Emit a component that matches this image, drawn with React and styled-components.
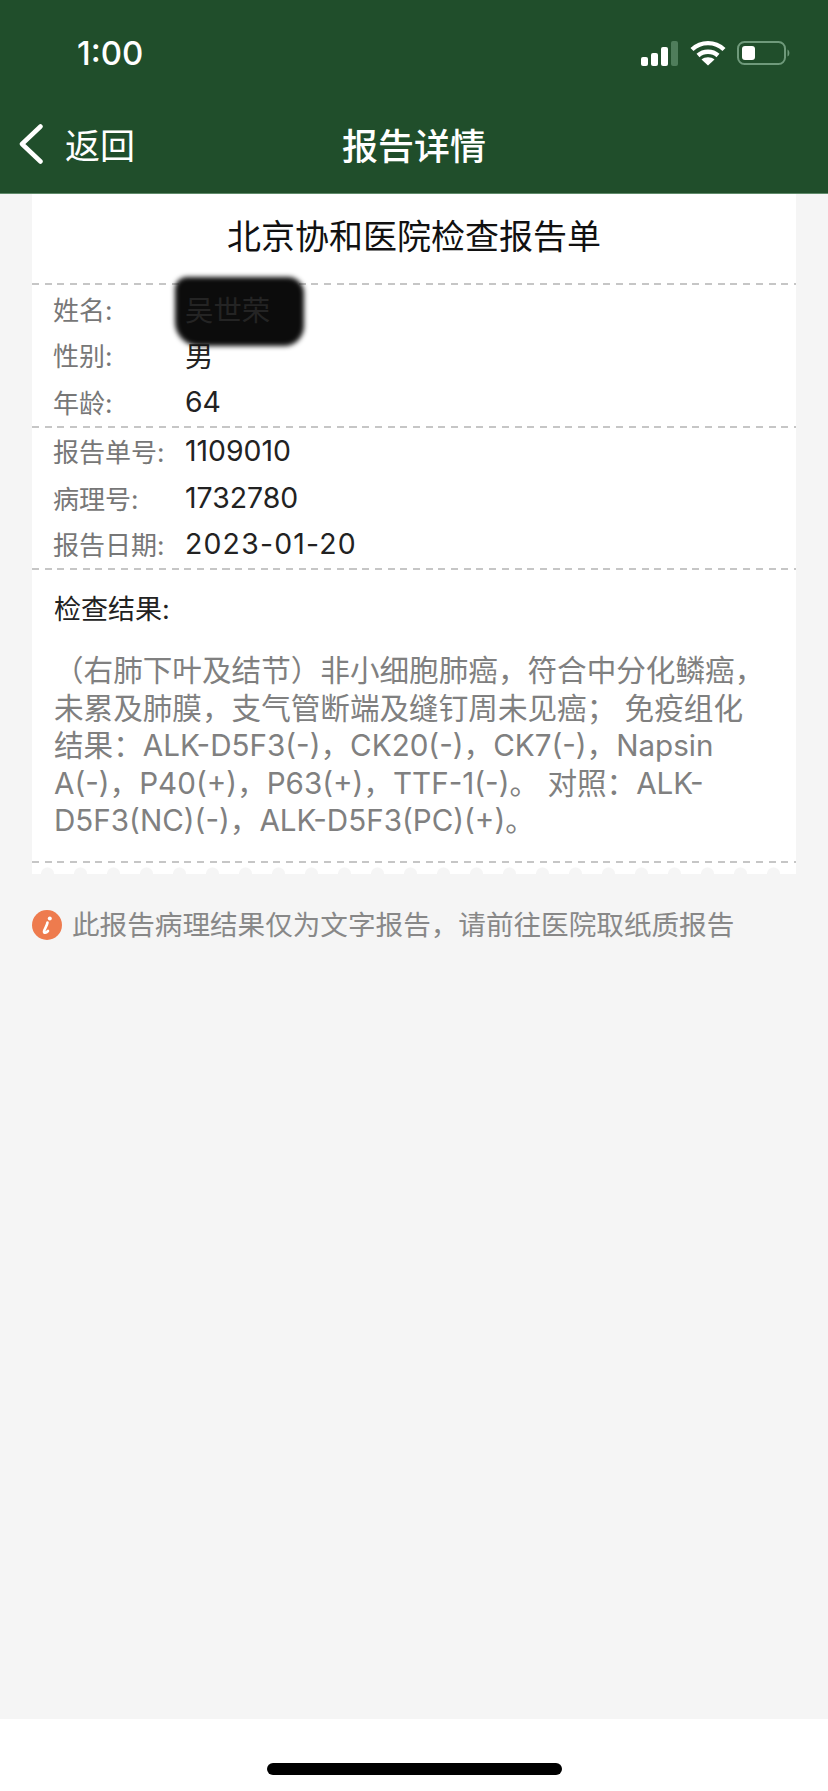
import React from "react"
import styled, { createGlobalStyle } from "styled-components"

const GlobalStyle = createGlobalStyle`
    html, body {
        margin: 0;
        padding: 0;
        background: #f5f5f5;
    }
    body {
        font-family: "Inter", "Noto Sans CJK SC", sans-serif;
    }
`

const Page = styled.div`
    width: 828px;
    height: 1791px;
    display: flex;
    flex-direction: column;
    overflow: hidden;
    background: #f5f5f5;
`

const Header = styled.header`
    height: 194px;
    box-sizing: border-box;
    flex: none;
    background: #204e2b;
    border-bottom: 1px solid #5f8a6a;
    color: #fff;
`

const StatusBar = styled.div`
    height: 105px;
    box-sizing: border-box;
    padding: 34px 37px 0 77px;
    display: flex;
    justify-content: space-between;
    align-items: flex-start;
`

const Clock = styled.span`
    font-size: 33px;
    line-height: 38px;
    font-weight: 500;
`

const StatusIcons = styled.div`
    display: flex;
    align-items: center;
    margin-top: 6px;
`

const NavBar = styled.nav`
    height: 82px;
    display: grid;
    grid-template-columns: 1fr auto 1fr;
    align-items: center;
    padding-bottom: 5px;
    box-sizing: border-box;
`

const BackLink = styled.div`
    display: flex;
    align-items: center;
    gap: 22px;
    padding-left: 19px;
    font-size: 35px;
    font-weight: 400;
`

const NavTitle = styled.h1`
    margin: 0;
    font-size: 36px;
    font-weight: 500;
`

const Card = styled.section`
    margin: 0 32px;
    background: #fff;
`

const ReportTitle = styled.h2`
    margin: 0;
    height: 89px;
    line-height: 86px;
    text-align: center;
    font-size: 34px;
    font-weight: 400;
    color: #111;
`

const Divider = styled.div`
    height: 2px;
    background: repeating-linear-gradient(90deg, #c6c6c6 0 7px, transparent 7px 12.7px);
`

const Fields = styled.div`
    padding: 0 22px 1px;
`

const FieldRow = styled.div`
    height: 46.5px;
    display: grid;
    grid-template-columns: 131px 1fr;
    align-items: center;
`

const Label = styled.span`
    font-size: 26px;
    margin-left: -1px;
    color: #777;
`

const Value = styled.span`
    font-size: 28.4px;
    letter-spacing: ${(p) => (p.$date ? "1.2px" : "0")};
    color: #222;
`

const MaskedValue = styled(Value)`
    position: relative;
    z-index: 1;
    width: fit-content;
    color: #242424;
    &::before {
        content: "";
        position: absolute;
        z-index: -1;
        left: -10px;
        right: -34px;
        top: -11px;
        bottom: -17px;
        background: #0c0c0c;
        border-radius: 12px 16px 20px 24px;
        filter: blur(2.5px);
    }
`

const Result = styled.div`
    padding: 20px 22px 21px;
`

const ResultHeading = styled.h3`
    margin: 0 0 22px;
    font-size: 27px;
    line-height: 40px;
    font-weight: 400;
    color: #222;
`

const ResultText = styled.p`
    margin: 0;
    font-size: 29.6px;
    line-height: 37.6px;
    color: #808080;
`

const Scallops = styled.div`
    height: 11px;
    margin: 0 32px;
    background-color: #fff;
    background-image: radial-gradient(circle at 50% 100%, #f5f5f5 0 6px, transparent 7px);
    background-size: 33px 11px;
    background-position: -1px 0;
`

const Notice = styled.div`
    margin: 36px 32px 0;
    display: flex;
    align-items: center;
    gap: 10px;
    font-size: 27.6px;
    line-height: 30px;
    color: #888;
`

const Spacer = styled.div`
    flex: 1;
`

const HomeArea = styled.footer`
    height: 72px;
    flex: none;
    background: #fff;
    display: flex;
    justify-content: center;
    padding-top: 44px;
    box-sizing: border-box;
`

const HomeBar = styled.div`
    width: 295px;
    height: 12px;
    border-radius: 6px;
    background: #000;
`

const SignalIcon = () => (
    <svg width="37" height="25" viewBox="0 0 37 25" fill="#fff">
        <rect x="0" y="16" width="7" height="9" rx="2" />
        <rect x="10" y="12" width="7" height="13" rx="2" />
        <rect x="20" y="6" width="7" height="19" rx="2" />
        <rect x="30" y="0" width="7" height="25" rx="2" fill="#4f7d5b" />
    </svg>
)

const WifiIcon = () => (
    <svg width="36" height="26" viewBox="0 0 36 26" fill="none" stroke="#fff" strokeWidth="4.4" style={{ marginLeft: 12 }}>
        <path d="M2 9.5C11 1 25 1 34 9.5" />
        <path d="M8 15.5C13.5 10.5 22.500 10.5 28 15.5" />
        <path d="M18 25.500L11.500 19.500C15 16.500 21 16.500 24.500 19.500Z" fill="#fff" stroke="none" />
    </svg>
)

const BatteryIcon = () => (
    <svg width="54" height="24" viewBox="0 0 54 24" style={{ marginLeft: 11 }}>
        <rect x="1" y="1" width="47" height="22" rx="6.500" fill="none" stroke="#6f9a7b" strokeWidth="2" />
        <rect x="5" y="5" width="13" height="14" rx="3" fill="#fff" />
        <path d="M50.500 8.500C53 9.500 53 14.500 50.500 15.500Z" fill="#6f9a7b" />
    </svg>
)

const BackIcon = () => (
    <svg width="24" height="40" viewBox="0 0 24 40" fill="none" stroke="#fff" strokeWidth="4.500" strokeLinecap="round" strokeLinejoin="round">
        <path d="M21.500 2.500L3 20L21.500 37.500" />
    </svg>
)

const InfoIcon = () => (
    <svg width="30" height="30" viewBox="0 0 30 30" style={{ flex: "none" }}>
        <circle cx="15" cy="15" r="15" fill="#ee7b4e" />
        <circle cx="17.800" cy="8.500" r="2" fill="#fff" />
        <path d="M15.500 12.500C15 16 12.500 19 12 21.500C11.800 23.500 14 23 16 21" fill="none" stroke="#fff" strokeWidth="2.600" strokeLinecap="round" />
    </svg>
)

const App = () => {
    return (
        <Page>
            <GlobalStyle />
            <Header>
                <StatusBar>
                    <Clock>1:00</Clock>
                    <StatusIcons>
                        <SignalIcon />
                        <WifiIcon />
                        <BatteryIcon />
                    </StatusIcons>
                </StatusBar>
                <NavBar>
                    <BackLink>
                        <BackIcon />
                        <span>返回</span>
                    </BackLink>
                    <NavTitle>报告详情</NavTitle>
                </NavBar>
            </Header>
            <Card>
                <ReportTitle>北京协和医院检查报告单</ReportTitle>
                <Divider />
                <Fields>
                    <FieldRow>
                        <Label>姓名:</Label>
                        <MaskedValue>吴世荣</MaskedValue>
                    </FieldRow>
                    <FieldRow>
                        <Label>性别:</Label>
                        <Value>男</Value>
                    </FieldRow>
                    <FieldRow>
                        <Label>年龄:</Label>
                        <Value>64</Value>
                    </FieldRow>
                </Fields>
                <Divider />
                <Fields>
                    <FieldRow>
                        <Label>报告单号:</Label>
                        <Value>1109010</Value>
                    </FieldRow>
                    <FieldRow>
                        <Label>病理号:</Label>
                        <Value>1732780</Value>
                    </FieldRow>
                    <FieldRow>
                        <Label>报告日期:</Label>
                        <Value $date>2023-01-20</Value>
                    </FieldRow>
                </Fields>
                <Divider />
                <Result>
                    <ResultHeading>检查结果:</ResultHeading>
                    <ResultText>
                        （右肺下叶及结节）非小细胞肺癌，符合中分化鳞癌，<br />
                        未累及肺膜，支气管断端及缝钉周未见癌； 免疫组化<br />
                        结果：ALK-D5F3(-)，CK20(-)，CK7(-)，Napsin<br />
                        A(-)，P40(+)，P63(+)，TTF-1(-)。 对照：ALK-<br />
                        D5F3(NC)(-)，ALK-D5F3(PC)(+)。
                    </ResultText>
                </Result>
                <Divider />
            </Card>
            <Scallops />
            <Notice>
                <InfoIcon />
                <span>此报告病理结果仅为文字报告，请前往医院取纸质报告</span>
            </Notice>
            <Spacer />
            <HomeArea>
                <HomeBar />
            </HomeArea>
        </Page>
    )
}

export default App
